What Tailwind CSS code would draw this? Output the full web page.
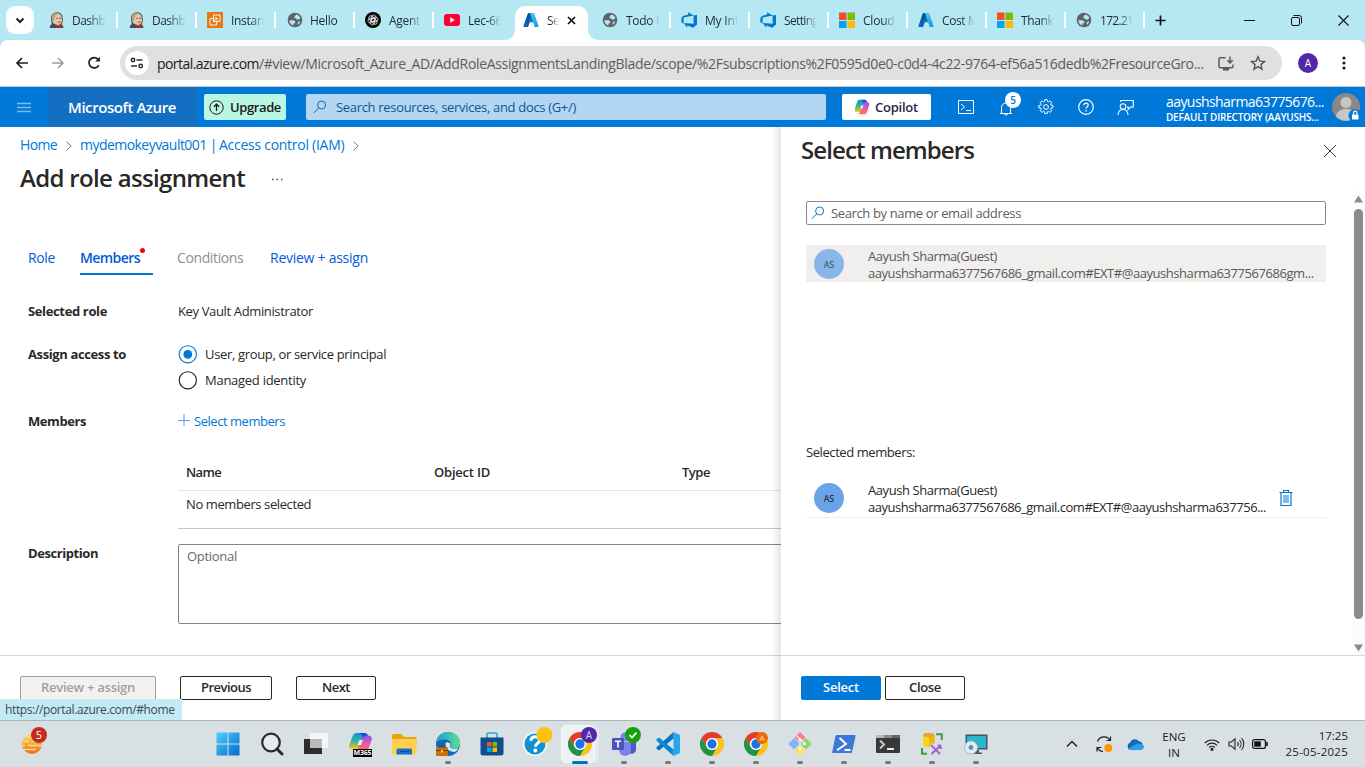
<!DOCTYPE html>
<html lang="en">
<head>
<meta charset="utf-8">
<title>Add role assignment - Microsoft Azure</title>
<script src="https://cdn.jsdelivr.net/npm/@tailwindcss/browser@4"></script>
</head>
<body class="w-[1365px] h-[767px] overflow-hidden bg-white font-['Open_Sans','Noto_Sans',sans-serif] text-[#292827] whitespace-nowrap">
<svg width="0" height="0" class="absolute">
  <defs>
    <linearGradient id="az1" x1="0" y1="0" x2="0" y2="1"><stop offset="0" stop-color="#114a8b"/><stop offset="1" stop-color="#0669bc"/></linearGradient>
    <linearGradient id="az2" x1="0" y1="0" x2="0" y2="1"><stop offset="0" stop-color="#3ccbf4"/><stop offset="1" stop-color="#2892df"/></linearGradient>
    <linearGradient id="win" gradientUnits="userSpaceOnUse" x1="0" y1="0" x2="24" y2="24"><stop offset="0" stop-color="#4fd3ff"/><stop offset="1" stop-color="#0067c9"/></linearGradient>
    <linearGradient id="cpL" x1="0" y1="0" x2="0" y2="1"><stop offset="0" stop-color="#0f8fe8"/><stop offset=".5" stop-color="#35b5a0"/><stop offset="1" stop-color="#ffcb05"/></linearGradient>
    <linearGradient id="cpR" x1="0" y1="0" x2="0" y2="1"><stop offset="0" stop-color="#7a5cf0"/><stop offset=".5" stop-color="#e85aa8"/><stop offset="1" stop-color="#ff7a45"/></linearGradient>
    <linearGradient id="edge" x1="0" y1="0" x2="1" y2="0"><stop offset="0" stop-color="#1c9be0"/><stop offset="1" stop-color="#5fe08a"/></linearGradient>
    <linearGradient id="sun" x1="0" y1="0" x2="0" y2="1"><stop offset="0" stop-color="#ffe14a"/><stop offset="1" stop-color="#ee6a10"/></linearGradient>
    <symbol id="jenkins" viewBox="0 0 16 16">
      <path d="M2.700 14C3 12 2.300 9.500 2 6.500 2.200 2.600 4.600.3 8 .3c3.600 0 5.500 2.200 5.600 5.400l.4 3.300-1.500 4z" fill="#5a4a40"/>
      <path d="M3.500 5.300C4 2.500 5.600 1.200 8 1.200c2.800 0 4.500 1.700 4.600 4.300l.5 3.500c-.4 2.400-2 3.800-4 4C6.300 13 3.600 11 3.300 9z" fill="#e6c6a2"/>
      <path d="M2.700 6.500C2.500 3.200 4.600 1 8 1c1.500.1 2.800.6 3.500 1.300-2 .1-3.700 0-4.900 1.200-1 1-1 2.800-1.500 4.300l-.6 1.600-1-.4z" fill="#b9a38a"/>
      <path d="M7.300 6.300h1.500M10.500 6.300h1.400M9 10c1 .4 1.800.3 2.500-.2" stroke="#4b3d36" stroke-width=".9" fill="none"/>
      <path d="M.8 16c0-2 .8-3.600 2.700-4.200l5 2 4-1.300c1.500.5 2 2 2 3.500z" fill="#2f4f6a"/>
      <path d="M7 12.600l2.700 1.200 2.900-1.500 1.200 3.400-3.500-.8L7.200 16z" fill="#d3241f"/>
    </symbol>
    <symbol id="globe" viewBox="0 0 16 16">
      <circle cx="8" cy="8" r="7.300" fill="#5f6368"/>
      <path d="M2.300 8.300h4.200l1.800 1.300v1.300l-1.800.6v1.900C4.200 13 2.500 11 2.300 8.300zM9.300 2.400c1.900.4 3.400 1.700 4.100 3.400l-1.400 1.700H9.800L8.700 6.300l-1.500-.2.600-1.900zM11.500 9.600l1.800.2c-.5 1.200-1.300 2.200-2.400 2.900l-.3-1.400z" fill="#b5e8f2"/>
    </symbol>
    <symbol id="azure" viewBox="0 0 16 16">
      <path d="M5.600 1h4.200L5.400 14.300a.9.9 0 0 1-.8.600H1.300a.8.8 0 0 1-.8-1.100L4.800 1.600A.9.900 0 0 1 5.600 1z" fill="url(#az1)"/>
      <path d="M4.500 10.200h7l-1.500-5L8.200 3 5.500 11z" fill="#0078d4"/>
      <path d="M10.400 1H6.300c.4 0 .7.200.8.600l4.300 12.200a.8.8 0 0 1-.8 1.100h4.100a.8.8 0 0 0 .8-1.100L11.200 1.600a.9.9 0 0 0-.8-.6z" fill="url(#az2)"/>
    </symbol>
    <symbol id="devops" viewBox="0 0 16 16">
      <path d="M16 3v9.500l-3.800 3.200-6-2.200v2.200L2.800 11l9.800.8V3.400zM12.700 3.500L7.100.200v2.200L2 3.900.4 6v4.600l2.200 1V5.600z" fill="#0078d7"/>
    </symbol>
    <symbol id="ms" viewBox="0 0 16 16">
      <path d="M0 .5h7.500V8H0z" fill="#f25022"/><path d="M8.500.500H16V8H8.500z" fill="#7fba00"/><path d="M0 9h7.500v7H0z" fill="#00a4ef"/><path d="M8.500 9H16v7H8.500z" fill="#ffb900"/>
    </symbol>
    <symbol id="chrome" viewBox="0 0 48 48">
      <path d="M24 12h20.800A24 24 0 0 0 3.200 12L13.600 30A12 12 0 0 1 24 12z" fill="#e33b2e"/>
      <path d="M24 48A24 24 0 0 0 44.800 12H24a12 12 0 0 1 10.400 18z" fill="#fcc31e"/>
      <path d="M3.200 12A24 24 0 0 0 24 48l10.400-18a12 12 0 0 1-20.800 0z" fill="#229342"/>
      <circle cx="24" cy="24" r="12" fill="#fff"/><circle cx="24" cy="24" r="9.300" fill="#1a73e8"/>
    </symbol>
    <symbol id="copilot" viewBox="1 1 22 22" preserveAspectRatio="none">
      <path d="M15.500 2H9C6.500 2 5.400 4 4.500 7L2.300 14c-.9 3 .2 5 2.700 5h3c2 0 2.700-1.300 3.300-3.300L14 7c.6-2 .8-3.500 3.500-3.500z" fill="url(#cpL)"/>
      <path d="M8.500 22H15c2.500 0 3.600-2 4.500-5l2.200-7c.9-3-.2-5-2.700-5h-3c-2 0-2.700 1.300-3.300 3.300L10 17c-.6 2-.8 3.500-3.500 3.500z" fill="url(#cpR)"/>
      <path d="M15.500 2H11l2 2 1 3C14.500 5.500 16 5 19 5c-.8-2-1.700-3-3.500-3z" fill="#1b4fd0"/>
      <path d="M11 9.500h3L12.500 14.500h-3z" fill="#fff" opacity=".85"/>
    </symbol>
    <symbol id="mag" viewBox="0 0 14 14"><circle cx="8.600" cy="5" r="4" fill="none" stroke="currentColor"/><path d="M5.700 7.900L1 12.800" stroke="currentColor" fill="none"/></symbol>
    <symbol id="chev" viewBox="0 0 8 10"><path d="M1.500.700L6.200 5 1.500 9.300" fill="none" stroke="#7a7978"/></symbol>
  </defs>
</svg>

<!-- Browser tab strip -->
<div class="h-10 bg-[#b5e8f2] flex items-center text-[12px] text-[#1f2a2e]">
  <div class="w-[39px] pl-1.5 shrink-0"><div class="size-7 rounded-[9px] bg-white flex items-center justify-center"><svg width="10" height="7" viewBox="0 0 10 7"><path d="M1.500 1.500L5 5l3.500-3.500" fill="none" stroke="#222" stroke-width="2"/></svg></div></div>
  <div class="w-[79px] h-4 flex items-center pl-2.5 border-r-2 border-white shrink-0"><svg class="size-4 shrink-0"><use href="#jenkins"/></svg><span class="mt-0.5 ml-[7px] w-[34px] tracking-[-0.55px] mask-r-from-50%">Dashb</span></div>
  <div class="w-[79px] h-4 flex items-center pl-[11px] border-r-2 border-white shrink-0"><svg class="size-4 shrink-0"><use href="#jenkins"/></svg><span class="mt-0.5 ml-[7px] w-[34px] tracking-[-0.55px] mask-r-from-50%">Dashb</span></div>
  <div class="w-[79px] h-4 flex items-center pl-2.5 border-r-2 border-white shrink-0"><svg class="size-4 shrink-0" viewBox="0 0 16 16"><path d="M0 0h16v16H0z" fill="#e57a12"/><path d="M6.500 3h6.500v6.500H6.500zM9.500 9.500V13H3V6.500h3.500M6 10l4-4M7.500 6H10v2.500" fill="none" stroke="#fff" stroke-width=".9"/></svg><span class="mt-0.5 ml-2 w-[33px] tracking-[-0.3px] mask-r-from-60%">Instan</span></div>
  <div class="w-[79px] h-4 flex items-center pl-[11px] border-r-2 border-white shrink-0"><svg class="size-4 shrink-0"><use href="#globe"/></svg><span class="mt-0.5 ml-[7px] w-[34px] tracking-[-0.3px] mask-r-from-80%">Hello</span></div>
  <div class="w-[79px] h-4 flex items-center pl-2.5 border-r-2 border-white shrink-0"><svg class="size-4 shrink-0" viewBox="0 0 16 16"><circle cx="8" cy="8" r="8" fill="#000"/><g fill="none" stroke="#e8e8e8" stroke-width=".8"><ellipse cx="8" cy="6.200" rx="2.400" ry="3.400" transform="rotate(15 8 8)"/><ellipse cx="8" cy="6.200" rx="2.400" ry="3.400" transform="rotate(75 8 8)"/><ellipse cx="8" cy="6.200" rx="2.400" ry="3.400" transform="rotate(135 8 8)"/><ellipse cx="8" cy="6.200" rx="2.400" ry="3.400" transform="rotate(195 8 8)"/><ellipse cx="8" cy="6.200" rx="2.400" ry="3.400" transform="rotate(255 8 8)"/><ellipse cx="8" cy="6.200" rx="2.400" ry="3.400" transform="rotate(315 8 8)"/></g></svg><span class="mt-0.5 ml-2 w-[33px] tracking-[-0.3px] mask-r-from-60%">Agent</span></div>
  <div class="w-[81px] h-4 flex items-center pl-2.5 shrink-0"><svg class="size-4 shrink-0" viewBox="0 0 16 16"><rect y="2" width="16" height="12" rx="3" fill="#f03"/><path d="M6.300 5.200L11 8l-4.700 2.800z" fill="#fff"/></svg><span class="mt-0.5 ml-2 w-[33px] tracking-[-0.4px] mask-r-from-60%">Lec-66</span></div>
  <div class="relative w-[73px] h-[34px] mt-1.5 bg-white rounded-t-[10px] flex items-center pl-2 shrink-0">
    <svg class="absolute -left-2.5 bottom-0" width="10" height="10"><path d="M10 0v10H0A10 10 0 0 0 10 0z" fill="#fff"/></svg>
    <svg class="absolute -right-2.5 bottom-0" width="10" height="10"><path d="M0 0v10h10A10 10 0 0 1 0 0z" fill="#fff"/></svg>
    <svg class="size-4 shrink-0 -mt-1.5"><use href="#azure"/></svg><span class="ml-2 -mt-1 w-[12px] tracking-[-0.6px] mask-r-from-30%">Se</span>
    <svg class="ml-2 -mt-1.5" width="9" height="9" viewBox="0 0 9 9"><path d="M1 1l7 7M8 1L1 8" stroke="#111" stroke-width="1.700"/></svg>
  </div>
  <div class="w-[83px] h-4 flex items-center pl-[14px] border-r-2 border-white shrink-0"><svg class="size-4 shrink-0"><use href="#globe"/></svg><span class="mt-0.5 ml-2 w-[33px] tracking-[-0.3px] mask-r-from-75%">Todo L</span></div>
  <div class="w-[79px] h-4 flex items-center pl-2.5 border-r-2 border-white shrink-0"><svg class="size-4 shrink-0"><use href="#devops"/></svg><span class="mt-0.5 ml-2 w-[33px] tracking-[-0.2px] mask-r-from-60%">My Inf</span></div>
  <div class="w-[79px] h-4 flex items-center pl-2.5 border-r-2 border-white shrink-0"><svg class="size-4 shrink-0"><use href="#devops"/></svg><span class="mt-0.5 ml-2 w-[33px] tracking-[-0.65px] mask-r-from-60%">Setting</span></div>
  <div class="w-[79px] h-4 flex items-center pl-2.5 border-r-2 border-white shrink-0"><svg class="size-4 shrink-0"><use href="#ms"/></svg><span class="mt-0.5 ml-2 w-[33px] tracking-[-0.2px] mask-r-from-60%">Cloud</span></div>
  <div class="w-[79px] h-4 flex items-center pl-2.5 border-r-2 border-white shrink-0"><svg class="size-4 shrink-0"><use href="#azure"/></svg><span class="mt-0.5 ml-2 w-[33px] tracking-[-0.4px] mask-r-from-60%">Cost M</span></div>
  <div class="w-[79px] h-4 flex items-center pl-2.5 border-r-2 border-white shrink-0"><svg class="size-4 shrink-0"><use href="#ms"/></svg><span class="mt-0.5 ml-2 w-[33px] tracking-[-0.4px] mask-r-from-60%">Thank</span></div>
  <div class="w-[79px] h-4 flex items-center pl-2.5 border-r-2 border-white shrink-0"><svg class="size-4 shrink-0"><use href="#globe"/></svg><span class="mt-0.5 ml-2 w-[33px] tracking-[-0.7px] mask-r-from-60%">172.21</span></div>
  <svg class="ml-2.5 shrink-0" width="11" height="11" viewBox="0 0 11 11"><path d="M5.500.500v10M.500 5.500h10" stroke="#111" stroke-width="1.700"/></svg>
  <svg class="ml-auto shrink-0" width="11" height="11" viewBox="0 0 11 11"><path d="M0 5.500h11" stroke="#111"/></svg>
  <svg class="ml-9 shrink-0" width="11" height="11" viewBox="0 0 11 11"><rect x=".5" y="2.500" width="8" height="8" rx="1.500" fill="none" stroke="#111"/><path d="M2.500.500H8a2.500 2.500 0 0 1 2.500 2.500v5.500" fill="none" stroke="#111"/></svg>
  <svg class="ml-9 mr-4 shrink-0" width="11" height="11" viewBox="0 0 11 11"><path d="M.500.500l10 10M10.500.500l-10 10" stroke="#111" stroke-width="1.100"/></svg>
</div>

<!-- Address bar -->
<div class="bg-[#b5e8f2]"><div class="h-[47px] bg-white rounded-t-lg border-b border-[#c4c6c8] flex items-center">
  <svg class="ml-[15px]" width="14" height="12" viewBox="0 0 14 12"><path d="M13 6H2M7 1L2 6l5 5" fill="none" stroke="#1f1f1f" stroke-width="1.700"/></svg>
  <svg class="ml-[22px]" width="14" height="12" viewBox="0 0 14 12"><path d="M1 6h11M7 1l5 5-5 5" fill="none" stroke="#9b9b9b" stroke-width="1.500"/></svg>
  <svg class="ml-[22px]" width="14" height="14" viewBox="0 0 14 14"><path d="M11.800 9.200A5.200 5.200 0 1 1 11 3.200L12 4.500" fill="none" stroke="#1f1f1f" stroke-width="1.700"/><path d="M12.900.800v4.700H8.200z" fill="#1f1f1f"/></svg>
  <div class="ml-[19px] w-[1162px] h-[34px] rounded-full bg-[#e0e0e0] flex items-center pl-[5px] text-[14px] text-[#5c5c5c]">
    <div class="size-6 rounded-full bg-white flex items-center justify-center"><svg width="14" height="12" viewBox="0 0 14 12"><g fill="none" stroke="#2d2d2d" stroke-width="1.500"><circle cx="3" cy="3" r="1.700"/><path d="M6.500 3H12.500M1 9h6"/><circle cx="10.700" cy="9" r="1.700"/></g></svg></div>
    <span class="ml-2 w-[102px] text-[#1b1b1b] tracking-[-0.56px]">portal.azure.com</span><span class="tracking-[-0.335px] w-[948px]">/#view/Microsoft_Azure_AD/AddRoleAssignmentsLandingBlade/scope/%2Fsubscriptions%2F0595d0e0-c0d4-4c22-9764-ef56a516dedb%2FresourceGro...</span>
    <svg class="ml-[11px] shrink-0" width="16" height="15" viewBox="0 0 16 15"><path d="M7.500 1.800H2.300A1.300 1.300 0 0 0 1 3v7.500a1.300 1.300 0 0 0 1.300 1.300h11.400a1.300 1.300 0 0 0 1.300-1.300V8.500" fill="none" stroke="#5a5a5a" stroke-width="1.500"/><path d="M5 11.500h6v3H5z" fill="#5a5a5a"/><path d="M12 .5v6M9.300 4.200L12 6.900l2.700-2.700" fill="none" stroke="#5a5a5a" stroke-width="1.500"/></svg>
    <svg class="ml-4 shrink-0" width="16" height="16" viewBox="0 0 16 16"><path d="M8 1.800l1.800 4.400 4.700.4-3.600 3 1.100 4.600L8 11.700l-4 2.500 1.100-4.600-3.600-3 4.700-.4z" fill="none" stroke="#555" stroke-width="1.400"/></svg>
  </div>
  <div class="ml-4 size-5 rounded-full bg-[#5128a6] text-white text-[10px] flex items-center justify-center">A</div>
  <svg class="ml-6" width="4" height="14" viewBox="0 0 4 14"><g fill="#1f1f1f"><circle cx="2" cy="2" r="1.600"/><circle cx="2" cy="7" r="1.600"/><circle cx="2" cy="12" r="1.600"/></g></svg>
</div></div>

<!-- Azure header -->
<header class="h-10 bg-[#0078d8] flex items-center text-white">
  <div class="w-12 flex justify-center"><svg width="14" height="11" viewBox="0 0 14 11"><path d="M0 1.500h14M0 5.500h14M0 9.500h14" stroke="#7fbcec" stroke-width="1.500"/></svg></div>
  <div class="w-[149px] h-full bg-[#126fc1] flex items-center pl-5 text-[15px] font-semibold tracking-[-0.44px]">Microsoft Azure</div>
  <div class="ml-[7px] w-[82px] h-[26px] rounded-[2px] bg-[#b9f6e3] text-[#1b1a19] flex items-center pl-[5px] text-[13px] font-semibold tracking-[-0.39px]"><svg class="mr-1.5" width="15" height="15" viewBox="0 0 15 15" fill="none" stroke="#1b1a19"><circle cx="7.500" cy="7.500" r="6.700"/><path d="M7.500 11V4.300M4.900 6.800l2.600-2.600 2.600 2.600" stroke-width="1.300"/></svg><span class="mt-0.5">Upgrade</span></div>
  <div class="ml-5 w-[520px] h-[26px] rounded-[2px] bg-[#b3d6f2] text-[#10558f] flex items-center pl-[7px] text-[13px] tracking-[-0.32px]"><svg class="size-3.5 mr-[9px] text-[#1668b0]"><use href="#mag"/></svg><span class="mt-0.5">Search resources, services, and docs (G+/)</span></div>
  <div class="ml-4 w-[89px] h-[26px] rounded-[2px] bg-white text-[#1f2a44] flex items-center pl-3 text-[13px] font-semibold tracking-[-0.23px]"><svg class="size-4 mr-[5px]"><use href="#copilot"/></svg><span class="mt-0.5">Copilot</span></div>
  <svg class="ml-[27px]" width="16" height="14" viewBox="0 0 16 14" fill="none" stroke="#fff"><path d="M.500.500h15v13H.500zM3 4l3.500 3L3 10M8 10.500h5"/></svg>
  <div class="relative ml-6 w-4 h-5"><svg class="absolute top-1 left-px" width="14" height="16" viewBox="0 0 14 16" fill="none" stroke="#fff"><path d="M1 12.500h12M2.500 12.500V6.500a4.500 4.500 0 0 1 9 0v6M5.500 13a1.600 1.600 0 0 0 3 0"/></svg>
    <div class="absolute left-[7px] -top-[5px] size-4 rounded-full bg-white text-[#0078d8] text-[10px] font-semibold flex items-center justify-center">5</div></div>
  <svg class="ml-6" width="16" height="16" viewBox="0 0 16 16" fill="none" stroke="#fff"><circle cx="8" cy="8" r="2.400"/><path d="M6.900.6h2.200l.4 1.900 1 .4L12.100 1.800l1.600 1.600-1.100 1.700.4 1 1.900.4v2.300l-1.900.4-.4 1 1.100 1.600-1.600 1.600-1.600-1.100-1 .4-.4 1.900H6.900l-.4-1.900-1-.4-1.600 1.100-1.600-1.600 1.100-1.600-.4-1L.8 8.900V6.600l2-.4.4-1L2.200 3.500l1.600-1.600L5.500 3l1-.5z"/></svg>
  <svg class="ml-6" width="16" height="16" viewBox="0 0 16 16" fill="none" stroke="#fff"><circle cx="8" cy="8" r="7.300" stroke-width="1.200"/><path d="M5.700 6.300A2.200 2.200 0 0 1 8 4.200c1.300 0 2.200.8 2.200 2 0 1.500-2.100 1.700-2.200 3.500" stroke-width="1.200"/><path d="M8 11v1.400" stroke-width="1.300"/></svg>
  <svg class="ml-[23px] mr-px" width="17" height="17" viewBox="0 0 17 17" fill="none" stroke="#fff" stroke-width="1.100"><circle cx="6" cy="7.500" r="2.800"/><path d="M1 16c.2-3.600 2-5.500 5-5.500s4.800 1.900 5 5.500M3.500 3V1.500h12.800V8h-2.500l-2.600 2.500V8H10"/></svg>
  <div class="ml-[31px] w-[160px] leading-[15px] pt-[5px]"><div class="text-[14px] tracking-[-0.57px]">aayushsharma63775676...</div><div class="text-[10px] font-semibold tracking-[-0.23px] mt-px">DEFAULT DIRECTORY (AAYUSHS...</div></div>
  <svg class="ml-1.5" width="30" height="30" viewBox="0 0 30 30"><circle cx="14" cy="15" r="14" fill="#8a8886"/><circle cx="14" cy="10.500" r="5.500" fill="#c8c6c4"/><path d="M4 24.500c.5-5 4.500-7.500 10-7.500s9.500 2.500 10 7.500A14 14 0 0 1 4 24.500z" fill="#c8c6c4"/><circle cx="23" cy="23.500" r="6.500" fill="#0078d8"/><path d="M20 22.500h6.500v5H20z" fill="#fff"/><path d="M21.500 22.500v-1.700a1.700 1.700 0 0 1 3.400 0v1.700" fill="none" stroke="#fff" stroke-width="1.200"/></svg>
</header>

<div class="h-[593px] flex">
  <!-- Role assignment blade -->
  <main class="relative w-[781px] shrink-0 overflow-hidden flex flex-col text-[13px]">
    <nav class="h-9 flex items-center pl-5 text-[14px] text-[#0078d4]"><span class="w-[37px] -mt-0.5 tracking-[-0.64px]">Home</span><svg class="ml-2 mt-0.5 w-2 h-2.5"><use href="#chev"/></svg><span class="ml-[7px] -mt-0.5 w-[139px] tracking-[-0.54px]">mydemokeyvault001 |</span><span class="-mt-0.5 w-[126px] tracking-[-0.27px]">Access control (IAM)</span><svg class="ml-[7px] mt-0.5 w-2 h-2.5"><use href="#chev"/></svg></nav>
    <div class="h-8 flex items-center pl-5"><h1 class="w-[225px] -mt-0.5 text-[24px] leading-8 font-semibold tracking-[-0.67px]">Add role assignment</h1><svg class="ml-[26px]" width="13" height="3"><path d="M1 1.500h1.500M5.500 1.500h1.500M10 1.500h1.500" stroke="#555" stroke-width="1.500"/></svg></div>
    <div class="mt-[46px] pl-7 h-[34px] flex text-[14px] leading-[34px] text-[#015cda]">
      <span class="w-[52px] tracking-[-0.37px]">Role</span>
      <span class="relative w-[73px] h-[34px] font-semibold tracking-[-0.57px] border-b-2 border-[#0078d4]">Members<i class="absolute left-[60px] top-[7px] size-[5px] rounded-full bg-[#f00]"></i></span>
      <span class="ml-6 w-[92px] text-[#8f8d8b] tracking-[-0.38px]">Conditions</span>
      <span class="ml-px tracking-[-0.26px]">Review + assign</span>
    </div>
    <div class="mt-[25px] mb-[-1px] pl-7 h-6 flex items-center"><b class="w-[150px] tracking-[-0.36px]">Selected role</b><span class="tracking-[-0.36px]">Key Vault Administrator</span></div>
    <div class="mt-[19px] pl-7 flex leading-6"><b class="w-[150px] tracking-[-0.38px]">Assign access to</b>
      <div class="flex flex-col gap-0.5">
        <label class="flex items-center h-6 tracking-[-0.34px]"><svg class="mr-2" width="19" height="19" viewBox="0 0 19 19"><circle cx="9.800" cy="9.300" r="8.600" fill="none" stroke="#0078d4" stroke-width="1.100"/><circle cx="9.800" cy="9.300" r="4.400" fill="#0078d4"/></svg>User, group, or service principal</label>
        <label class="flex items-center h-6 tracking-[-0.27px]"><svg class="mr-2" width="19" height="19" viewBox="0 0 19 19"><circle cx="9.800" cy="9.300" r="8.600" fill="none" stroke="#201f1e" stroke-width="1.100"/></svg>Managed identity</label>
      </div></div>
    <div class="mt-[18px] mb-[-1px] pl-7 h-6 flex items-center"><b class="w-[150px] tracking-[-0.43px]">Members</b><a class="flex items-center text-[#0078d4] tracking-[-0.46px]"><svg class="mr-1 -mt-1" width="12" height="12"><path d="M6 0v12M0 6.500h12" stroke="#5a9be8"/></svg>Select members</a></div>
    <div class="mt-[22px] ml-[178px] border-b border-[#c8c6c4]">
      <div class="h-9 border-b border-[#e5e4e3] flex items-center pl-2 font-semibold"><span class="w-[248px] tracking-[-0.6px]">Name</span><span class="w-[248px] tracking-[-0.21px]">Object ID</span><span class="tracking-[-0.47px]">Type</span></div>
      <div class="h-[37px] pl-2 leading-[27px] tracking-[-0.4px]">No members selected</div>
    </div>
    <div class="mt-[15px] pl-7 flex"><b class="w-[150px] shrink-0 tracking-[-0.43px] leading-[19px]">Description</b><div class="w-[660px] shrink-0 h-20 rounded-[2px] border border-[#868482] pl-2 pt-0.5 leading-[18px] text-[#6b6967] tracking-[-0.29px]">Optional</div></div>
    <div class="mt-auto h-[65px] border-t border-[#d9d8d7] pt-5 pl-5 flex gap-6 font-semibold">
      <div class="w-[136px] h-6 rounded-[2px] border border-[#a19f9d] bg-[#f3f2f1] text-[#a19f9d] text-center leading-[20px] tracking-[-0.26px]">Review + assign</div>
      <div class="w-[92px] h-6 rounded-[2px] border border-[#292827] text-center leading-[20px] tracking-[-0.52px]">Previous</div>
      <div class="w-20 h-6 rounded-[2px] border border-[#292827] text-center leading-[20px] tracking-[-0.5px]">Next</div>
    </div>
    <div class="absolute left-0 bottom-0 w-[182px] h-[21px] bg-[#c3ebf5] border-r border-t border-[#d5e4e8] pl-[5px] text-[12px] leading-5 tracking-[-0.37px] text-[#41484c]">https://portal.azure.com/#home</div>
    <div class="absolute right-0 top-0 w-2.5 h-full bg-linear-to-l from-black/10 to-transparent"></div>
  </main>

  <!-- Select members panel -->
  <aside class="w-[584px] flex flex-col bg-white text-[13px]">
    <div class="h-16 flex justify-between pl-5 pr-[29px]"><h2 class="mt-[7px] text-[24px] leading-8 font-semibold tracking-[-0.9px]">Select members</h2><svg class="mt-[18px]" width="12" height="12"><path d="M0 0l12 12M12 0L0 12" stroke="#333"/></svg></div>
    <div class="h-[464px] flex">
      <div class="w-[571px] pl-[25px] pr-[26px] pt-2.5">
        <div class="h-6 rounded-[2px] border border-[#8a8886] flex items-center pl-1 text-[#605e5c] tracking-[-0.37px]"><svg class="size-3.5 mr-1.5 text-[#0078d4]"><use href="#mag"/></svg><span class="mt-0.5">Search by name or email address</span></div>
        <div class="mt-5 h-[37px] bg-[#f0efee] flex items-center pl-2 text-[#5a5856]"><div class="size-[30px] rounded-full bg-[#88b5ea] text-[#3b4654] text-[9px] pt-0.5 flex items-center justify-center">AS</div><div class="ml-6 mt-0.5 leading-[17px]"><div class="tracking-[-0.43px]">Aayush Sharma(Guest)</div><div class="tracking-[-0.445px]">aayushsharma6377567686_gmail.com#EXT#@aayushsharma6377567686gm...</div></div></div>
        <div class="mt-[160px] h-5 leading-5 tracking-[-0.42px]">Selected members:</div>
        <div class="mt-[18px] h-[38px] border-b border-[#f0efee] flex items-center pl-2"><div class="size-[30px] -mt-0.5 rounded-full bg-[#6ba3e8] text-[#111] text-[9px] pt-0.5 flex items-center justify-center">AS</div><div class="ml-6 w-[399px] leading-[17px]"><div class="tracking-[-0.43px]">Aayush Sharma(Guest)</div><div class="tracking-[-0.47px]">aayushsharma6377567686_gmail.com#EXT#@aayushsharma637756...</div></div>
          <svg class="ml-3 -mt-0.5" width="14" height="16" viewBox="0 0 14 16"><path d="M.500 2.500h13M4.500 2.500v-2h5v2M2 2.500v13h10v-13" fill="none" stroke="#0078d4" stroke-width="1.200"/><path d="M4 5h6v8H4z" fill="#7fb9ee"/></svg></div>
      </div>
      <div class="w-[13px] bg-[#fcfcfc] flex flex-col items-center pt-1"><svg width="9" height="8"><path d="M4.500.500L9 7.500H0z" fill="#8a8a8a"/></svg><div class="mt-1.5 w-[9px] h-[410px] rounded-full bg-[#8b8b8b]"></div><svg class="mt-[25px]" width="9" height="8"><path d="M4.500 7.500L9 .5H0z" fill="#8a8a8a"/></svg></div>
    </div>
    <div class="h-[65px] border-t border-[#d9d8d7] pt-5 pl-5 flex gap-1 font-semibold text-center">
      <div class="w-20 h-6 rounded-[2px] bg-[#0078d7] text-white leading-[22px] tracking-[-0.23px]">Select</div>
      <div class="w-20 h-6 rounded-[2px] border border-[#292827] leading-[20px] tracking-[-0.33px]">Close</div>
    </div>
  </aside>
</div>

<!-- Windows taskbar -->
<footer class="h-[47px] bg-[#d9e0e4] border-t border-[#b0b5b9] flex text-[11.500px] text-[#1b1b1b]">
  <div class="w-[205px] pl-5 pt-1.5 shrink-0"><div class="relative w-7 h-7"><svg class="absolute top-1.5 left-0" width="23" height="22" viewBox="0 0 23 22"><circle cx="12" cy="11" r="10" fill="url(#sun)"/><path d="M0 8.500h9M12 8.500h10M0 12.500h5M8 12.500h14M2 16.500h14M4 4.500h6" stroke="#e6d9b0" stroke-width="1.300"/></svg><div class="absolute left-[11px] top-0 size-4 rounded-full bg-[#c42b1c] text-white text-[11px] flex items-center justify-center">5</div></div></div>
  <div class="flex *:w-11 *:shrink-0 *:h-[46px] *:relative *:flex *:items-center *:justify-center">
    <div><svg class="ml-px" width="24" height="24" viewBox="0 0 24 24"><path d="M.500.500h11v11H.500zM12.500.500h11v11h-11zM.500 12.500h11v11H.500zM12.500 12.500h11v11h-11z" fill="url(#win)"/></svg></div>
    <div><svg class="ml-0.5" width="24" height="24" viewBox="0 0 24 24" fill="none"><circle cx="11" cy="10.500" r="8.800" fill="#e6ebee" stroke="#2b2b2b" stroke-width="2.200"/><path d="M17 17l5 5" stroke="#2b2b2b" stroke-width="3" stroke-linecap="round"/></svg></div>
    <div><svg class="ml-0.5" width="24" height="24" viewBox="0 0 24 24"><path d="M0 7h18v15H0z" fill="#2d2d2d"/><path d="M6 1h18v15H6z" fill="#f6f6f6"/><path d="M6 7h12v9H6z" fill="#b9bcbe"/></svg></div>
    <div><svg class="-mt-1 ml-0.5" width="25" height="21"><use href="#copilot" width="25" height="21"/></svg><span class="absolute left-4 top-[28px] w-[19px] h-[8px] bg-black text-white text-[7px] leading-[8px] font-bold text-center tracking-[-0.2px]">M365</span></div>
    <div><svg class="ml-0.5" width="25" height="24" viewBox="0 0 25 24"><path d="M0 3.500A1.500 1.500 0 0 1 1.500 2H9l3 3h11a1.500 1.500 0 0 1 1.500 1.500V12H0z" fill="#e8a30c"/><path d="M0 7h24.500v14A1.500 1.500 0 0 1 23 22.500H1.500A1.500 1.500 0 0 1 0 21z" fill="#ffd04d"/><path d="M4.500 22.500v-4.500a1.500 1.500 0 0 1 1.500-1.500h12.500a1.500 1.500 0 0 1 1.500 1.500v4.500z" fill="#1274c8"/><path d="M8 19.500h9" stroke="#0b4d90"/></svg></div>
    <div><svg class="ml-0.5" width="24" height="24" viewBox="0 0 24 24"><circle cx="12" cy="12" r="12" fill="#1267b4"/><path d="M0 11C.8 4.500 5.800 0 12 0c7 0 12 5 12 11 0 4-3 6-6.500 6-3 0-4.500-1.500-3-3.500 1.500-2.500-.8-6-5.500-6C5 7.500 1.500 9 0 11z" fill="url(#edge)"/><path d="M9.500 11c1.500-1.500 4-.5 5 1-1.500 3 0 5 3.500 5 2 0 3.500-.5 4.500-1.500-.5 2-2 3.500-4 4.500-5 0-9.500-4-9-9z" fill="#d9e8f0"/><path d="M0 15.500h12V24H0z" fill="#c9710e"/><path d="M0 18.500h12M4 15.500V14h4v1.500" stroke="#7a3a05" fill="none"/><path d="M5 18h2v2.500H5z" fill="#ffcf4a"/></svg><i class="absolute bottom-[3px] left-5 w-1.5 h-[3px] rounded-full bg-[#767a7d]"></i></div>
    <div><svg class="ml-0.5" width="24" height="24" viewBox="0 0 24 24"><path d="M7 6V2.500A1.500 1.500 0 0 1 8.500 1h7A1.500 1.500 0 0 1 17 2.500V6" fill="none" stroke="#2ba0e0" stroke-width="1.600"/><path d="M.500 5.500h23V21A2.500 2.500 0 0 1 21 23.500H3A2.500 2.500 0 0 1 .500 21z" fill="#0f4f8b"/><path d="M7 10h4.500v4.500H7z" fill="#f25022"/><path d="M12.500 10H17v4.500h-4.500z" fill="#7fba00"/><path d="M7 15.500h4.500V20H7z" fill="#00a4ef"/><path d="M12.500 15.500H17V20h-4.500z" fill="#ffb900"/></svg></div>
    <div><svg width="30" height="30" viewBox="0 0 30 30" class="ml-0.5 overflow-visible"><circle cx="14" cy="15" r="12" fill="#f4fafd"/><circle cx="14" cy="15" r="10.500" fill="#1191d0"/><path d="M10 11.700c0-2.600 1.800-4 4.200-4s4.200 1.400 4.200 3.700c0 3-4 3-4 6.300" fill="none" stroke="#fff" stroke-width="3"/><circle cx="14.300" cy="21.500" r="1.900" fill="#fff"/><circle cx="23.500" cy="6" r="8" fill="#ffc20e"/></svg></div>
    <div><div class="absolute left-[5px] top-1 w-[37px] h-[38px] rounded-[5px] border border-[#e4e9ec] bg-[#e5eaed]"></div><div class="absolute left-1 top-1 w-[34px] h-[38px] rounded-[5px] bg-[#edf1f3] border border-[#f5f7f8]"></div><svg class="relative ml-0.5 size-6"><use href="#chrome"/></svg><div class="absolute left-6 top-1.5 size-4 rounded-full bg-[#5128a6] text-[#dcd2f3] text-[10px] flex items-center justify-center">A</div><i class="absolute bottom-[3px] left-[15px] w-4 h-[3px] rounded-full bg-[#0a6fc9]"></i></div>
    <div><svg class="ml-0.5" width="26" height="26" viewBox="0 0 26 26"><circle cx="14" cy="6" r="4.500" fill="#7b83eb"/><circle cx="22" cy="8" r="3" fill="#5059c9"/><path d="M17 11h8v7a4.500 4.500 0 0 1-8 3z" fill="#5059c9"/><path d="M8 11h12v8a6 6 0 0 1-12 0z" fill="#7b83eb"/><rect x="1" y="7" width="12" height="12" rx="1" fill="#4b53bc"/><path d="M4 10.300h6M7 10.300v6.200" stroke="#fff" stroke-width="1.600"/></svg><svg class="absolute left-6 top-1.5" width="16" height="16"><circle cx="8" cy="8" r="8" fill="#13a10e"/><path d="M4.500 8.200l2.500 2.300 4.500-4.800" fill="none" stroke="#fff" stroke-width="1.800"/></svg><i class="absolute bottom-[3px] left-5 w-1.5 h-[3px] rounded-full bg-[#767a7d]"></i></div>
    <div><svg class="ml-0.5" width="24" height="24" viewBox="0 0 24 24"><path d="M17.500 0L24 3v18l-6.500 3z" fill="#28a6ea"/><path d="M17.500 0v6.500L3 18.500.500 16.700v-1.500z" fill="#0a75bd"/><path d="M17.500 24v-6.500L3 5.500.500 7.300v1.500z" fill="#0b89d3"/></svg><i class="absolute bottom-[3px] left-5 w-1.5 h-[3px] rounded-full bg-[#767a7d]"></i></div>
    <div><svg class="ml-0.5 size-6"><use href="#chrome"/></svg><i class="absolute bottom-[3px] left-5 w-1.5 h-[3px] rounded-full bg-[#767a7d]"></i></div>
    <div><svg class="ml-0.5 size-6"><use href="#chrome"/></svg><div class="absolute left-[23px] top-[11px] size-3 rounded-full bg-[#ef6c00] text-[#ffe0c4] text-[8px] flex items-center justify-center">A</div><i class="absolute bottom-[3px] left-5 w-1.5 h-[3px] rounded-full bg-[#767a7d]"></i></div>
    <div><svg class="ml-0.5" width="24" height="24" viewBox="0 0 24 24"><path d="M12 0l5.500 5.500L12 11 6.500 5.500z" fill="#ff7b80"/><path d="M6 6l5.500 6L6 17.500.300 12z" fill="#80b3ff"/><path d="M18 6l5.700 6L18 17.500 12.500 12z" fill="#8fd464"/><path d="M12 12.800l5.500 5.500L12 24l-5.500-5.700z" fill="#ffdc68"/><path d="M8.500 3.500L17 12M12 8v9" stroke="#e4e9ec" stroke-width="1.400"/><circle cx="12" cy="7.500" r="1.500" fill="#fff"/><circle cx="16.500" cy="11.800" r="1.500" fill="#fff"/><circle cx="12" cy="17" r="1.500" fill="#fff"/></svg><i class="absolute bottom-[3px] left-5 w-1.5 h-[3px] rounded-full bg-[#767a7d]"></i></div>
    <div><svg class="ml-0.5" width="24" height="24" viewBox="0 0 24 24"><path d="M4.500 3h18.300a.8.8 0 0 1 .8 1L20 20.200a1.200 1.200 0 0 1-1.200.8H1a.8.8 0 0 1-.8-1L3.500 3.800a1 1 0 0 1 1-.8z" fill="#3c78d8"/><path d="M7.500 6l6.500 6-9 6.300M12.500 18h6" fill="none" stroke="#fff" stroke-width="2"/></svg><i class="absolute bottom-[3px] left-5 w-1.5 h-[3px] rounded-full bg-[#767a7d]"></i></div>
    <div><svg class="ml-0.5" width="24" height="24" viewBox="0 0 24 24"><rect y="3" width="24" height="18" rx="1" fill="#383838"/><path d="M0 3h8v3H0z" fill="#b8b8b8"/><path d="M8 3h8v3H8z" fill="#8a8a8a"/><path d="M16 3h8v3h-8z" fill="#666"/><path d="M4 8.500l4 4-4 4" fill="none" stroke="#c8c8c8" stroke-width="2"/><path d="M11 17h7" stroke="#fff" stroke-width="1.800"/></svg><i class="absolute bottom-[3px] left-5 w-1.5 h-[3px] rounded-full bg-[#767a7d]"></i></div>
    <div><svg class="ml-0.5" width="24" height="24" viewBox="0 0 24 24"><path d="M3 3v10.500c0 2 11.500 2 11.500 0V3z" fill="#fdd21c"/><path d="M9 3h5.500v10.500c0 1-3 1.500-5.500 1.500z" fill="#f2b600"/><ellipse cx="8.700" cy="3" rx="5.700" ry="2.300" fill="#e8a13c"/><path d="M16 2.300h5.800V8M2 16v5.800h5" fill="none" stroke="#3f9b46" stroke-width="2"/><path d="M10 11.500h12v11H10z" fill="#d9e0e4"/><path d="M11 13l9 9M21 13l-9.500 9M18.500 12.500l.5 3 3 .5" fill="none" stroke="#a05fd0" stroke-width="1.900"/></svg><i class="absolute bottom-[3px] left-5 w-1.5 h-[3px] rounded-full bg-[#767a7d]"></i></div>
    <div><svg class="ml-0.5" width="24" height="24" viewBox="0 0 24 24"><path d="M1.500 2.500h22v15h-22z" fill="#3b5763"/><path d="M3 4h19v12H3z" fill="#2cb5d0"/><path d="M11 17.500h4v3h3V22H9z" fill="#4b5a62"/><circle cx="7" cy="15.500" r="6.500" fill="#e4ebf0" stroke="#aab9c4"/><circle cx="7" cy="15.500" r="2.400" fill="#4b98c8"/></svg><i class="absolute bottom-[3px] left-5 w-1.5 h-[3px] rounded-full bg-[#767a7d]"></i></div>
  </div>
  <div class="ml-auto flex items-center pr-[17px] leading-4">
    <svg width="12" height="8" viewBox="0 0 12 8"><path d="M1 6.500l5-5 5 5" fill="none" stroke="#222" stroke-width="1.500"/></svg>
    <svg class="ml-[17px]" width="18" height="18" viewBox="0 0 18 18" fill="none" stroke="#222" stroke-width="1.200"><path d="M2.500 6.500A7 7 0 0 1 15 5M15.500 1.500V5.500H11.500M2 16.500V12.500h4.500M2.500 13A7 7 0 0 0 8 16.500"/><circle cx="13.300" cy="13" r="4" fill="#ff9800" stroke="none"/></svg>
    <svg class="ml-[13px]" width="18" height="12" viewBox="0 0 18 12"><path d="M4.500 12A4 4 0 0 1 4 4.500 5.200 5.200 0 0 1 13 3.200 4.600 4.600 0 0 1 14 12z" fill="#0f6cbd"/><path d="M4.500 12L2 11l8-5c2-1 7-.500 8 2.500 0 2-1.500 3.500-3.500 3.500z" fill="#2aa0ea"/></svg>
    <div class="ml-[18px] mt-0.5 w-6 text-center">ENG<br>IN</div>
    <svg class="ml-[18px]" width="16" height="13" viewBox="0 0 16 13" fill="none" stroke="#222" stroke-width="1.200"><path d="M.800 5a10.200 10.200 0 0 1 14.400 0M3 7.300a7 7 0 0 1 10 0M5.200 9.500a4 4 0 0 1 5.600 0"/><circle cx="8" cy="11.300" r="1" fill="#222"/></svg>
    <svg class="ml-2" width="17" height="14" viewBox="0 0 17 14" fill="none" stroke="#222" stroke-width="1.100"><path d="M1 5h2.500L7 1.700v10.600L3.500 9H1zM9.500 5a3 3 0 0 1 0 4M11.500 3a6 6 0 0 1 0 8M13.500 1.200a8.500 8.500 0 0 1 0 11.600"/></svg>
    <svg class="ml-[7px]" width="16" height="10" viewBox="0 0 16 10"><rect x=".6" y=".6" width="12.800" height="8.800" rx="2" fill="none" stroke="#111" stroke-width="1.200"/><path d="M2.300 2.300h6.500v5.400H2.300z" fill="#111"/><path d="M14.500 3.200h1v3.600h-1z" fill="#111" stroke="#111" stroke-width=".6"/></svg>
    <div class="ml-[17px] w-[63px] text-right"><div>17:25</div><div class="tracking-[0.25px]">25-05-2025</div></div>
  </div>
</footer>
</body>
</html>
